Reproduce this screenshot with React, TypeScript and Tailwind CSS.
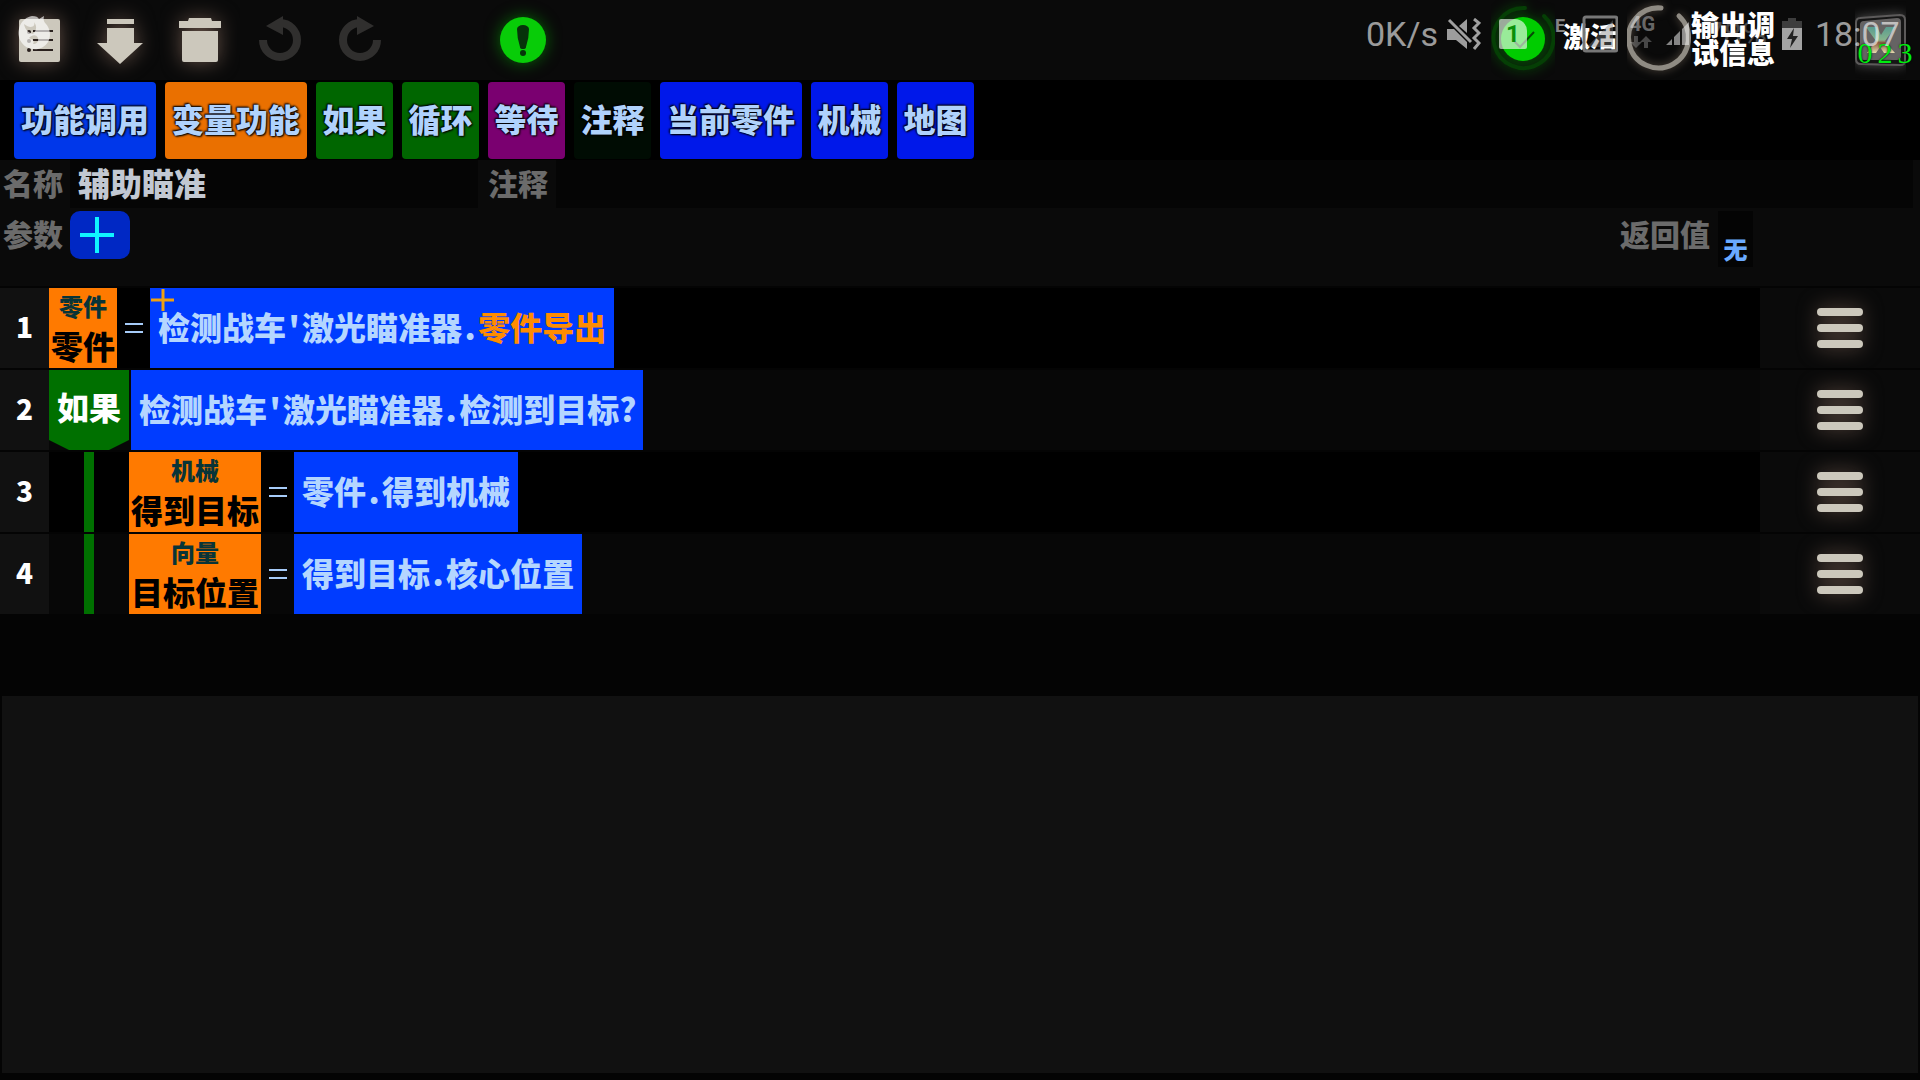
import type { ReactNode } from "react";

type Tab = { label: string; className: string };

const tabs: Tab[] = [
  { label: "功能调用", className: "w-[142px] bg-[#0037ea]" },
  { label: "变量功能", className: "w-[142px] bg-[#ea7000]" },
  { label: "如果", className: "w-[77px] bg-[#006600]" },
  { label: "循环", className: "w-[77px] bg-[#006600]" },
  { label: "等待", className: "w-[77px] bg-[#7a0070]" },
  { label: "注释", className: "w-[77px] bg-[#000c03]" },
  { label: "当前零件", className: "w-[142px] bg-[#0018ea]" },
  { label: "机械", className: "w-[77px] bg-[#0018ea]" },
  { label: "地图", className: "w-[77px] bg-[#0018ea]" },
];

function ToolButton({ label, children }: { label: string; children: ReactNode }) {
  return (
    <button type="button" aria-label={label} className="h-20 w-20 shrink-0">
      <svg viewBox="0 0 80 80" className="h-20 w-20">
        {children}
      </svg>
    </button>
  );
}

function Glow({ children }: { children: ReactNode }) {
  return <g className="fill-[#ccc8bc] drop-shadow-[0_0_10px_rgba(190,150,130,0.5)]">{children}</g>;
}

function UndoArrow() {
  return (
    <g>
      <path d="M23 40a17 17 0 1 0 17-17" fill="none" stroke="#302f2e" strokeWidth="8" />
      <path d="M26 26 43 16v19z" fill="#302f2e" />
    </g>
  );
}

function Toolbar() {
  return (
    <div className="flex">
      <ToolButton label="列表">
        <Glow>
          <rect x="19" y="19" width="41" height="43" rx="2" />
        </Glow>
        <path d="M33 31h20M33 40h20M33 50h20" stroke="#2a211e" strokeWidth="2" />
        <g fill="#2a211e">
          <circle cx="29" cy="32" r="2" />
          <circle cx="29" cy="41" r="2" />
          <circle cx="29" cy="50" r="2" />
        </g>
        <g opacity="0.65">
          <path
            fillRule="evenodd"
            d="M32 16c4 0 6 1 7 3l5-3c-1 4 0 6 2 8 7 8 5 22-8 25-6 1-14-1-18-9-4-10 1-22 12-24zM24 24c1 6 5 9 9 10 4-4 4-8 1-12 2 5-4 7-10 2zM29 38c3-3 7-4 9 0 1 4-2 6-5 6 2-3-1-5-4-6z"
            fill="#fff"
          />
        </g>
      </ToolButton>
      <ToolButton label="下载">
        <Glow>
          <path d="M27 19h27v5H27zM27 28h27v15h9L40 64 17 43h10z" />
        </Glow>
      </ToolButton>
      <ToolButton label="删除">
        <Glow>
          <path d="M19 21h9l1-3h22l1 3h9v7H19zM22 31h36v29q0 2-2 2H24q-2 0-2-2z" />
        </Glow>
      </ToolButton>
      <ToolButton label="撤销">
        <UndoArrow />
      </ToolButton>
      <ToolButton label="重做">
        <g transform="translate(80 0) scale(-1 1)">
          <UndoArrow />
        </g>
      </ToolButton>
      <div className="w-[83px] shrink-0" />
      <ToolButton label="提示">
        <circle cx="40" cy="40" r="23" className="fill-[#08cc08] drop-shadow-[0_0_8px_rgba(0,200,0,0.5)]" />
        <path d="M34 29a6 4 0 0 1 12 0q0 9-3 18a3 2 0 0 1-6 0q-3-9-3-18z" fill="#06330a" />
        <circle cx="40" cy="53" r="3" fill="#06330a" />
      </ToolButton>
    </div>
  );
}

function DebugControls() {
  return (
    <div className="flex h-20 items-start pr-[14px] font-black text-white">
      <button type="button" className="flex h-20 items-start gap-2">
        <svg viewBox="0 0 64 80" className="h-20 w-16">
          <g className="drop-shadow-[0_0_6px_rgba(0,140,0,0.6)]">
            <path d="M34 8a30 30 0 1 0 19 8" fill="none" stroke="#053f05" strokeWidth="4" strokeLinecap="round" />
            <circle cx="32" cy="39" r="22" fill="#00cc00" />
          </g>
          <path d="M21 39l8 8 14-15" fill="none" stroke="#064a06" strokeWidth="2" />
        </svg>
        <span className="pt-[22px] text-[27px] leading-7">激活</span>
      </button>
      <button type="button" className="ml-[10px] flex h-20 items-start">
        <svg viewBox="0 0 64 80" className="h-20 w-16">
          <path
            d="M34 8a30 30 0 1 0 18 8"
            fill="none"
            stroke="#8f8b83"
            strokeWidth="5"
            strokeLinecap="round"
            className="drop-shadow-[0_0_4px_rgba(160,140,120,0.5)]"
          />
        </svg>
        <span className="w-[84px] pt-[10px] text-[28px] leading-7">输出调试信息</span>
      </button>
      <button type="button" aria-label="关闭" className="relative ml-20 h-20 w-[51px]">
        <svg viewBox="0 0 51 80" className="h-20 w-[51px]">
          <defs>
            <linearGradient id="mark" x1="0" y1="0" x2="0" y2="1">
              <stop offset="0" stopColor="#5a9c90" />
              <stop offset="0.5" stopColor="#86b48c" />
              <stop offset="0.6" stopColor="#8a5a40" />
              <stop offset="1" stopColor="#e6dcae" />
            </linearGradient>
          </defs>
          <path
            d="M5 18l40-3q5 0 5 5v41q0 4-5 4L6 64q-5 0-5-5V23q0-5 4-5z"
            fill="#161616"
            stroke="#5c5a5a"
            strokeWidth="2"
            className="drop-shadow-[0_0_6px_rgba(150,150,150,0.5)]"
          />
          <path d="M9 21l33-3q4 0 4 4v34q0 4-4 4H9q-4 0-4-4V25q0-4 4-4z" fill="#656363" />
          <path d="M11 27h11l4 8 5-8h9L30 41l10 12H29l-4-6-4 6h-9l9-12z" fill="url(#mark)" />
        </svg>
        <span className="absolute top-9 left-0 flex font-['Liberation_Serif',serif] text-[30px] leading-[34px] font-normal text-[#00ee10] [text-shadow:0_0_2px_#000]">
          <span className="w-5 text-center">0</span>
          <span className="w-5 text-center">2</span>
          <span className="w-5 text-center">3</span>
        </span>
      </button>
    </div>
  );
}

// Phone status bar, drawn translucent above the game's own toolbar
function SystemStatus() {
  return (
    <div className="pointer-events-none absolute inset-x-0 top-0 flex h-[68px] items-center justify-end pr-5 font-[Roboto,sans-serif] text-[34px] font-normal text-white/60">
      <span className="w-[81px]">0K/s</span>
      <svg viewBox="0 0 34 32" className="mr-[18px] h-8 w-[34px] fill-white/60">
        <path d="M0 11h7l13 13v7L9 22H0zM12 8l8-7v14z" />
        <path d="M2 2l22 22M27 1l5 4-5 5 5 5-5 5 5 5-5 6" fill="none" stroke="#a0a0a0" strokeWidth="3" />
      </svg>
      <span className="mr-7 flex h-[30px] w-7 items-center justify-center rounded-[2px] rounded-tr-xl bg-white/60 text-2xl font-bold text-[#0a8f0a]">
        1
      </span>
      <span className="w-[27px] pb-4 text-lg leading-5 font-bold text-white/50">E</span>
      <svg viewBox="0 0 36 38" className="mr-3 h-[38px] w-9">
        <rect x="2" y="2" width="33" height="34" rx="2" fill="none" stroke="#777" strokeWidth="3" />
        <path d="M31 5v27H5z" fill="#777" opacity="0.4" />
      </svg>
      <span className="flex w-9 flex-col pb-2">
        <span className="text-xl leading-6 font-bold text-white/40">4G</span>
        <svg viewBox="0 0 22 12" className="h-3 w-[22px] fill-white/25">
          <path d="M4 0h4v6h4l-6 6-6-6h4zM14 12h4V6h4l-6-6-6 6h4z" />
        </svg>
      </span>
      <svg viewBox="0 0 24 26" className="mr-[14px] h-[26px] w-6 fill-white/50">
        <path d="M0 24l6-6v6zM8 16l6-6v14H8zM16 8l7-7v23h-7z" />
      </svg>
      <span className="w-[78px] text-white/25">78%</span>
      <svg viewBox="0 0 20 32" className="mr-[13px] h-8 w-5">
        <path d="M6 0h8v3h6v7H0V3h6z" fill="#3d3d3d" />
        <path d="M0 10h20v22H0z" fill="#a3a3a3" />
        <path d="M12 10L5 21h5l-2 9 8-12h-5z" fill="#222" />
      </svg>
      <span className="w-[85px]">18:07</span>
    </div>
  );
}

// Latin punctuation takes half of a Chinese character's cell
function Code({ text }: { text: string }) {
  return (
    <>
      {Array.from(text).map((ch, i) =>
        /[.'?]/.test(ch) ? (
          <span key={i} className="inline-block w-4 text-center">
            {ch}
          </span>
        ) : (
          ch
        ),
      )}
    </>
  );
}

function Variable({ type, name }: { type: string; name: string }) {
  return (
    <button type="button" className="flex h-20 shrink-0 flex-col items-center bg-[#ff7a00] px-[2px]">
      <span className="pt-[2px] text-2xl leading-8 text-[#083438]">{type}</span>
      <span className="text-[32px] leading-[46px] text-black">{name}</span>
    </button>
  );
}

function Equals() {
  return (
    <span role="img" aria-label="等于" className="flex w-[33px] shrink-0 justify-center">
      <svg viewBox="0 0 18 10" className="h-[10px] w-[18px]">
        <path d="M0 1h18M0 9h18" stroke="#a6cbf8" strokeWidth="2" />
      </svg>
    </span>
  );
}

function Expression({ text, tail, marked }: { text: string; tail?: string; marked?: boolean }) {
  return (
    <button type="button" className="relative h-20 shrink-0 bg-[#003cff] px-2 pb-1 text-[32px] text-[#b4d6ff]">
      {marked && (
        <svg viewBox="0 0 24 24" className="absolute top-px left-px h-6 w-6">
          <path d="M12 0v22M0 11h23" stroke="#f0a010" strokeWidth="3" />
        </svg>
      )}
      <Code text={text} />
      {tail && <span className="text-[#ff8c00]">{tail}</span>}
    </button>
  );
}

function Indent() {
  return (
    <div className="flex h-20 w-20 shrink-0 justify-center">
      <div className="w-[10px] bg-[#007000]" />
    </div>
  );
}

const lines: ReactNode[] = [
  <>
    <Variable type="零件" name="零件" />
    <Equals />
    <Expression text="检测战车'激光瞄准器." tail="零件导出" marked />
  </>,
  <>
    <button
      type="button"
      className="mr-[2px] h-20 w-20 shrink-0 bg-[#007000] pb-2 text-[32px] text-white [clip-path:polygon(0_0,100%_0,100%_70px,60px_100%,20px_100%,0_70px)]"
    >
      如果
    </button>
    <Expression text="检测战车'激光瞄准器.检测到目标?" />
  </>,
  <>
    <Indent />
    <Variable type="机械" name="得到目标" />
    <Equals />
    <Expression text="零件.得到机械" />
  </>,
  <>
    <Indent />
    <Variable type="向量" name="目标位置" />
    <Equals />
    <Expression text="得到目标.核心位置" />
  </>,
];

export default function App() {
  return (
    <div className="flex min-h-screen flex-col bg-[#040404] font-['Noto_Sans_CJK_SC',sans-serif] font-black">
      <header className="relative flex h-20 justify-between overflow-hidden bg-[#0a0a0a]">
        <Toolbar />
        <DebugControls />
        <SystemStatus />
      </header>

      <nav className="flex h-20 items-center gap-[9px] bg-black px-[14px]">
        {tabs.map((tab) => (
          <button
            key={tab.label}
            type="button"
            className={`h-[77px] shrink-0 rounded-sm pb-1 text-[32px] whitespace-nowrap text-[#b0d2fc] [text-shadow:0_0_2px_#000,1px_1px_2px_#000,-1px_-1px_2px_#000] ${tab.className}`}
          >
            {tab.label}
          </button>
        ))}
      </nav>

      <section className="border-b-2 border-[#040404] bg-[#0a0a0a] text-[30px] text-[#6b6b6b]">
        <div className="flex h-12 pr-[7px]">
          <label htmlFor="name" className="w-[70px] shrink-0 pl-[3px] leading-[44px]">
            名称
          </label>
          <input
            id="name"
            defaultValue="辅助瞄准"
            className="w-[408px] shrink-0 bg-[#050505] px-2 pb-1 text-[32px] text-[#c2c8d2] outline-none"
          />
          <label htmlFor="comment" className="w-[78px] shrink-0 pl-[10px] leading-[44px]">
            注释
          </label>
          <input
            id="comment"
            className="min-w-0 flex-1 bg-[#050505] px-2 pb-1 text-[32px] text-[#c2c8d2] outline-none"
          />
        </div>
        <div className="flex h-[78px] items-start pt-[3px] pr-[167px]">
          <span className="w-[70px] shrink-0 pl-[3px] leading-[44px]">参数</span>
          <button type="button" aria-label="添加参数" className="h-12 w-[60px] rounded-[10px] bg-[#0028c4]">
            <svg viewBox="0 0 60 48" className="h-12 w-[60px]">
              <path d="M27 6v36M10 24h34" stroke="#10f4ff" strokeWidth="4" />
            </svg>
          </button>
          <span className="ml-auto leading-[44px]">返回值</span>
          <button type="button" className="ml-2 h-14 w-[35px] bg-[#040404] pt-5 text-2xl text-[#6aaaff]">
            无
          </button>
        </div>
      </section>

      <ol className="flex flex-col gap-[2px]">
        {lines.map((line, i) => (
          <li key={i} className="flex h-20 items-center odd:bg-black even:bg-[#070707]">
            <span className="flex h-20 w-[49px] shrink-0 items-center justify-center bg-[#111] pb-1 text-[28px] text-white">
              {i + 1}
            </span>
            {line}
            <button type="button" aria-label="菜单" className="ml-auto h-20 w-40 shrink-0 bg-[#0a0a0a]">
              <svg viewBox="0 0 160 80" className="h-20 w-40">
                <Glow>
                  <rect x="57" y="20" width="46" height="8" rx="4" />
                  <rect x="57" y="36" width="46" height="8" rx="4" />
                  <rect x="57" y="52" width="46" height="8" rx="4" />
                </Glow>
              </svg>
            </button>
          </li>
        ))}
      </ol>

      <div className="mx-[2px] mt-[82px] mb-[7px] flex-1 bg-[#111]" />
    </div>
  );
}
